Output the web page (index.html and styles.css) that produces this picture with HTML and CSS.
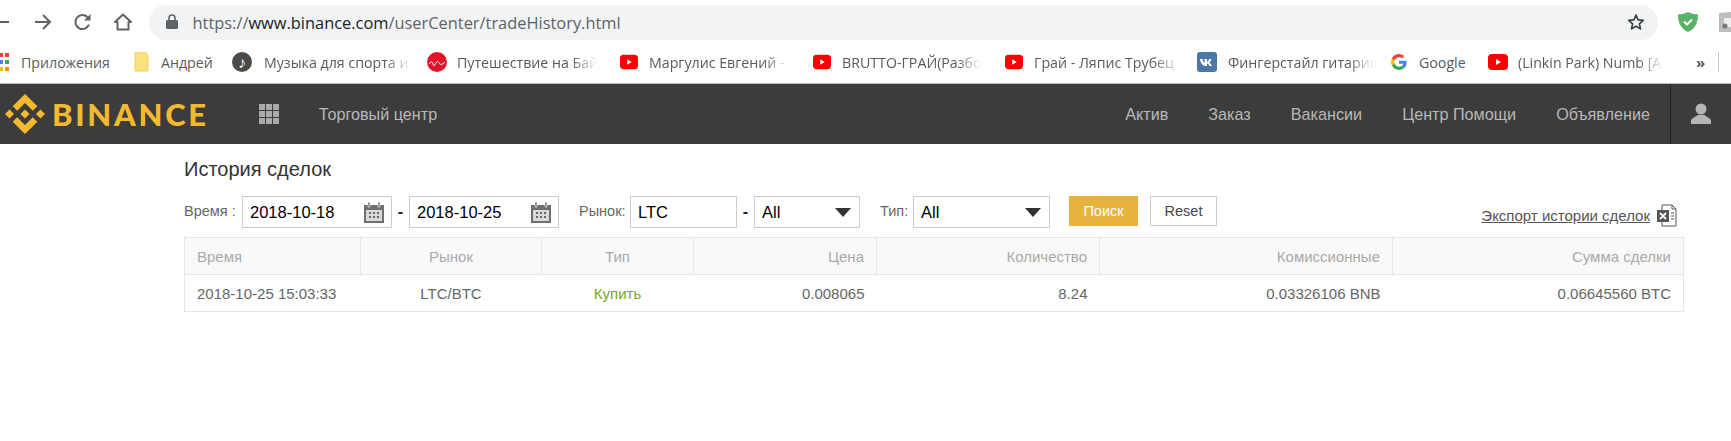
FILE: index.html
```html
<!DOCTYPE html>
<html lang="ru">
<head>
<meta charset="utf-8">
<title>История сделок</title>
<link rel="stylesheet" href="styles.css">
</head>
<body>
<svg class="defs" width="0" height="0">
  <symbol id="yt" viewBox="0 0 20 16"><rect width="20" height="16" y="0" rx="4" fill="#f00"/><path d="M8 5l5 3-5 3z" fill="#fff"/></symbol>
  <symbol id="cal" viewBox="0 0 20 22"><path d="M0 4h20v18H0z" fill="#6f6f6f"/><path d="M2 9h16v11H2z" fill="#d9d9d9"/><path d="M4 1h2v5H4zM14 1h2v5h-2z" fill="#6f6f6f" stroke="#fff" stroke-width=".6"/><path d="M5 11h2v2H5zM9 11h2v2H9zM13 11h2v2h-2zM5 15h2v2H5zM9 15h2v2H9zM13 15h2v2h-2z" fill="#666"/></symbol>
</svg>

<div class="toolbar">
  <svg class="back tool" width="22" height="20" viewBox="0 0 22 20"><path d="M20 10H3M10 3l-7 7 7 7" fill="none" stroke="#5f6368" stroke-width="2"/></svg>
  <svg class="forward tool" width="20" height="20" viewBox="0 0 20 20"><path d="M2 10h15M10 3l7 7-7 7" fill="none" stroke="#5f6368" stroke-width="2"/></svg>
  <svg class="reload tool" width="20" height="20" viewBox="0 0 20 20"><path d="M16 12.500a7 7 0 1 1-1-6.700" fill="none" stroke="#5f6368" stroke-width="2"/><path d="M17.500 2v6.500H11z" fill="#5f6368"/></svg>
  <svg class="home tool" width="20" height="20" viewBox="0 0 20 20"><path d="M10 2.500L2 10h2.500v7.500h11V10H18z" fill="none" stroke="#5f6368" stroke-width="2" stroke-linejoin="round"/></svg>
  <div class="omnibox">
    <svg class="lock" width="12" height="16" viewBox="0 0 12 16"><path d="M3 6V4a3 3 0 0 1 6 0v2" fill="none" stroke="#5f6368" stroke-width="1.600"/><rect y="6" width="12" height="9" rx="1.500" fill="#5f6368"/></svg>
    <span class="url"><span class="url-dim">https://</span>www.binance.com<span class="url-dim">/userCenter/tradeHistory.html</span></span>
    <svg class="star" width="18" height="18" viewBox="0 0 24 24"><path d="M12 2.800l2.800 6.300 6.900.7-5.200 4.600 1.500 6.800-6-3.500-6 3.500 1.500-6.800-5.200-4.600 6.900-.7z" fill="none" stroke="#3c4043" stroke-width="2.200" stroke-linejoin="round"/></svg>
  </div>
  <svg class="shield" width="20" height="22" viewBox="0 0 20 22"><path d="M10 1c3 1.600 6 2.300 10 2.300C20 12 17 18 10 21 3 18 0 12 0 3.300 4 3.300 7 2.600 10 1z" fill="#58b368"/><path d="M6 10.500l3 3 5-5" fill="none" stroke="#fff" stroke-width="2"/></svg>
  <svg class="ext" width="13" height="22" viewBox="0 0 13 22"><path d="M0 2l13-1v20H0z" fill="#bdbdbd"/><path d="M5 7h8v9H5z" fill="#eee"/><circle cx="6" cy="15" r="2.500" fill="#777"/></svg>
</div>

<div class="bookmarks">
  <svg class="apps" width="10" height="18" viewBox="0 0 10 18"><path d="M0 0h4v4H0z" fill="#ea4335"/><path d="M6 0h4v4H6z" fill="#ea4335"/><path d="M0 7h4v4H0z" fill="#4285f4"/><path d="M6 7h4v4H6z" fill="#34a853"/><path d="M0 14h4v4H0z" fill="#fbbc05"/><path d="M6 14h4v4H6z" fill="#fb8c00"/></svg>
  <span class="bm-label apps-label">Приложения</span>
  <svg class="folder" width="15" height="20" viewBox="0 0 15 20"><path d="M1 0h10l3 3v16H1z" fill="#fbe27f" stroke="#f3cf58"/></svg>
  <span class="bm-label andrey">Андрей</span>
  <span class="music">♪</span>
  <span class="bm-label fade first-fade">Музыка для спорта и</span>
  <svg class="travel" width="20" height="20" viewBox="0 0 20 20"><circle cx="10" cy="10" r="10" fill="#e0152a"/><path d="M2 12c2-3 3-3 4 0s2 1 3-1 2-2 3 0 3 2 6-1" fill="none" stroke="#fff"/></svg>
  <span class="bm-label fade trip">Путешествие на Бай</span>
  <svg class="yt" width="18" height="16"><use href="#yt"/></svg>
  <span class="bm-label fade">Маргулис Евгений -</span>
  <svg class="yt yt-b" width="18" height="16"><use href="#yt"/></svg>
  <span class="bm-label fade">BRUTTO-ГРАЙ(Разбо</span>
  <svg class="yt" width="18" height="16"><use href="#yt"/></svg>
  <span class="bm-label fade wide-grai">Грай - Ляпис Трубец</span>
  <svg class="vk" width="20" height="20" viewBox="0 0 20 20"><rect width="20" height="20" rx="3" fill="#4a76a8"/><path d="M3 7h2.500c.3 2 1 3.500 2 4V7H10v3c1-.4 1.800-1.700 2.200-3H14.500c-.4 1.700-1.300 3-2.200 3.700 1 .6 2 1.800 2.700 3.300h-2.500c-.5-1.200-1.400-2.200-2.500-2.400V14h-.8C6 14 3.600 11.500 3 7z" fill="#fff"/></svg>
  <span class="bm-label fade vk-label">Фингерстайл гитарис</span>
  <svg class="google" width="16" height="16" viewBox="0 0 48 48"><path fill="#ea4335" d="M24 9.500c3.500 0 6.700 1.200 9.200 3.600l6.900-6.900C35.900 2.400 30.500 0 24 0 14.600 0 6.500 5.400 2.600 13.200l8 6.200C12.500 13.700 17.800 9.500 24 9.500z"/><path fill="#4285f4" d="M46.900 24.500c0-1.600-.1-3.100-.4-4.500H24v9h12.900c-.6 3-2.200 5.400-4.700 7.100l7.700 6c4.500-4.200 7-10.300 7-17.600z"/><path fill="#fbbc05" d="M10.500 28.600c-.5-1.500-.8-3-.8-4.600s.3-3.200.8-4.600l-8-6.200C.9 16.500 0 20.100 0 24s.9 7.500 2.600 10.800z"/><path fill="#34a853" d="M24 48c6.500 0 11.900-2.100 15.900-5.900l-7.700-6c-2.200 1.500-4.900 2.300-8.200 2.300-6.200 0-11.500-4.200-13.400-9.800l-8 6.200C6.500 42.600 14.600 48 24 48z"/></svg>
  <span class="bm-label google-label">Google</span>
  <svg class="yt yt-last" width="20" height="16"><use href="#yt"/></svg>
  <span class="bm-label fade last-fade">(Linkin Park) Numb [A</span>
  <span class="more">»</span>
  <span class="bm-sep"></span>
</div>

<header class="nav">
  <svg class="logo-mark" width="40" height="40" viewBox="0 0 126.610 126.610"><path fill="#f3ba2f" d="M38.730 53.200l24.590-24.580 24.600 24.600 14.300-14.310L63.320 0 24.420 38.900l14.310 14.300zM0 63.310L14.300 49l14.310 14.310-14.310 14.300zM38.730 73.410L63.320 98l24.600-24.600 14.310 14.290-38.900 38.910-38.910-38.880-.02-.02zM98 63.310L112.300 49l14.310 14.300-14.310 14.320zM77.830 63.300L63.320 48.780 52.590 59.510l-1.240 1.230-2.540 2.540 14.510 14.500 14.510-14.470z"/></svg>
  <span class="logo-text">BINANCE</span>
  <div class="grid-icon"><i></i><i></i><i></i><i></i><i></i><i></i><i></i><i></i><i></i></div>
  <a class="nav-link trade">Торговый центр</a>
  <nav class="nav-right">
    <a class="nav-link">Актив</a>
    <a class="nav-link">Заказ</a>
    <a class="nav-link">Вакансии</a>
    <a class="nav-link">Центр Помощи</a>
    <a class="nav-link">Объявление</a>
  </nav>
  <div class="user">
    <svg width="20" height="22" viewBox="0 0 20 22"><circle cx="10" cy="6" r="5.500" fill="#b5b5b5"/><path d="M0 21v-3c0-3 5-4 6.500-6h7c1.500 2 6.500 3 6.500 6v3z" fill="#b5b5b5"/></svg>
  </div>
</header>

<main class="page">
  <h1 class="title">История сделок</h1>
  <div class="filters">
    <span class="label time-label">Время :</span>
    <div class="field date"><span>2018-10-18</span><svg width="20" height="22"><use href="#cal"/></svg></div>
    <b class="dash">-</b>
    <div class="field date"><span>2018-10-25</span><svg width="20" height="22"><use href="#cal"/></svg></div>
    <span class="label market-label">Рынок:</span>
    <div class="field market"><span>LTC</span></div>
    <b class="dash">-</b>
    <div class="field select all-one"><span>All</span><i class="caret"></i></div>
    <span class="label type-label">Тип:</span>
    <div class="field select all-two"><span>All</span><i class="caret"></i></div>
    <button class="btn search">Поиск</button>
    <button class="btn reset">Reset</button>
    <a class="export"><span>Экспорт истории сделок</span>
      <svg width="20" height="23" viewBox="0 0 20 23"><path d="M5 6V1h10l4 4v17H5v-4" fill="#fff" stroke="#555"/><path d="M15 1v4h4" fill="none" stroke="#555"/><rect y="6" width="12" height="12" fill="#555"/><path d="M3 9l6 6M9 9l-6 6" stroke="#fff" stroke-width="1.800"/><path d="M14 9h3M14 12h3M14 15h3" stroke="#555"/></svg>
    </a>
  </div>
  <table class="history">
    <colgroup>
      <col class="c1"><col class="c2"><col class="c3"><col class="c4"><col class="c5"><col class="c6"><col class="c7">
    </colgroup>
    <thead>
      <tr>
        <th class="left">Время</th><th class="center">Рынок</th><th class="center">Тип</th>
        <th>Цена</th><th>Количество</th><th>Комиссионные</th><th>Сумма сделки</th>
      </tr>
    </thead>
    <tbody>
      <tr>
        <td class="left">2018-10-25 15:03:33</td><td class="center">LTC/BTC</td><td class="center buy">Купить</td>
        <td>0.008065</td><td>8.24</td><td>0.03326106 BNB</td><td>0.06645560 BTC</td>
      </tr>
    </tbody>
  </table>
</main>
</body>
</html>
```

FILE: styles.css
```css
* { box-sizing: border-box; }
html, body { margin: 0; padding: 0; }
body {
  width: 1731px;
  height: 441px;
  overflow: hidden;
  background: #fff;
  font-family: "Liberation Sans", Arial, sans-serif;
  color: #666;
}
.defs { display: block; height: 0; }

/* browser toolbar */
.toolbar {
  height: 45px;
  display: flex;
  align-items: center;
  padding-bottom: 2px;
}
.tool { flex: none; }
.back { margin-left: -11px; }
.forward { margin-left: 22px; }
.reload { margin-left: 20px; }
.home { margin-left: 20px; }
.omnibox {
  flex: none;
  width: 1509px;
  height: 35px;
  margin-left: 16px;
  margin-top: 1px;
  border-radius: 18px;
  background: #f1f3f4;
  display: flex;
  align-items: center;
  padding-left: 17px;
  padding-right: 13px;
}
.url {
  margin-left: 14.500px;
  font-family: "Open Sans", sans-serif;
  font-size: 16.400px;
  color: #202124;
  white-space: nowrap;
}
.url-dim { color: #5f6368; }
.star { margin-left: auto; }
.shield { margin-left: 20px; flex: none; }
.ext { margin-left: 21px; flex: none; }

/* bookmarks */
.bookmarks {
  height: 39px;
  border-bottom: 1px solid #bdbdbd;
  display: flex;
  align-items: center;
  padding-bottom: 4px;
  font-family: "Open Sans", sans-serif;
  font-size: 14.200px;
  color: #5a5a5a;
  white-space: nowrap;
}
.bookmarks svg { flex: none; }
.apps { margin-left: -1px; }
.bm-label { flex: none; margin-left: 11px; }
.apps-label { margin-left: 12px; width: 89px; }
.folder { margin-left: 24px; }
.andrey { margin-left: 12px; width: 51px; }
.music {
  flex: none;
  width: 20px;
  height: 20px;
  margin-left: 20px;
  border-radius: 50%;
  background: #4a4a4a;
  color: #fff;
  font-size: 16px;
  line-height: 20px;
  text-align: center;
}
.fade {
  width: 140px;
  overflow: hidden;
  -webkit-mask-image: linear-gradient(to right, #000 82%, transparent 100%);
  mask-image: linear-gradient(to right, #000 82%, transparent 100%);
}
.first-fade { margin-left: 12px; width: 147px; }
.travel { margin-left: 16px; }
.trip { width: 140px; margin-left: 10px; }
.yt { margin-left: 22px; }
.fade + .yt { margin-left: 23px; }
.bookmarks .yt-b { margin-left: 24px; }
.wide-grai { width: 146px; }
.vk { margin-left: 17px; }
.vk-label { margin-left: 11px; width: 147px; }
.google { margin-left: 16px; }
.google-label { margin-left: 12px; width: 48px; }
.bookmarks .yt-last { margin-left: 21px; }
.last-fade { width: 146px; margin-left: 10px; }
.more { flex: none; margin-left: 32px; font-size: 15px; font-weight: 700; width: 8px; }
.bm-sep { flex: none; width: 1px; height: 20px; margin-left: 14px; background: #ccc; }

/* site header */
.nav {
  height: 60px;
  background: #3c3c3c;
  display: flex;
  align-items: center;
  padding-left: 5px;
}
.logo-mark { flex: none; margin-top: -1px; }
.logo-text {
  margin-left: 7px;
  font-family: "Lato", sans-serif;
  font-weight: 900;
  font-size: 31px;
  letter-spacing: 2.700px;
  line-height: 1;
  color: #f3ba2f;
}
.grid-icon {
  flex: none;
  width: 20px;
  height: 20px;
  margin-left: 50px;
  display: grid;
  grid-template-columns: repeat(3, 6px);
  grid-auto-rows: 6px;
  gap: 1px;
}
.grid-icon i { background: #aaa; }
.nav-link { font-size: 16.200px; color: #b8b8b8; white-space: nowrap; }
.trade { margin-left: 40px; }
.nav-right {
  margin-left: auto;
  display: flex;
  gap: 40px;
  padding-right: 20px;
}
.user {
  flex: none;
  width: 61px;
  height: 60px;
  border-left: 1px solid #222;
  display: flex;
  align-items: center;
  justify-content: center;
}

/* page */
.page { width: 1684px; padding-left: 184px; }
.title {
  margin: 14px 0 0;
  height: 23px;
  font-size: 20px;
  line-height: 23px;
  font-weight: 400;
  color: #333;
}
.filters {
  height: 31px;
  margin-top: 15px;
  display: flex;
  align-items: flex-start;
  white-space: nowrap;
}
.label { font-size: 14.500px; line-height: 31px; }
.time-label { width: 58px; }
.market-label { margin-left: 20px; width: 51px; }
.type-label { margin-left: 20px; width: 33px; }
.field {
  flex: none;
  height: 32px;
  border: 1px solid #ccc;
  display: flex;
  align-items: center;
  padding: 0 7px;
  color: #000;
  font-size: 16.500px;
  background: #fff;
}
.date { width: 150px; justify-content: space-between; padding-right: 7px; }
.date svg { flex: none; }
.market { width: 107px; }
.select { justify-content: space-between; }
.all-one { width: 106px; }
.all-two { width: 137px; }
.caret {
  width: 0;
  height: 0;
  margin-right: 1px;
  border-left: 8px solid transparent;
  border-right: 8px solid transparent;
  border-top: 9px solid #333;
}
.dash {
  flex: none;
  width: 17px;
  text-align: center;
  line-height: 31px;
  font-size: 16px;
  color: #222;
}
.btn {
  flex: none;
  height: 30px;
  font: inherit;
  font-size: 14.500px;
  padding: 0;
}
.search { width: 69px; margin-left: 19px; border: 0; background: #e8b23f; color: #fff; }
.reset { width: 67px; margin-left: 12px; border: 1px solid #ccc; background: #fff; color: #444; }
.export {
  margin-left: auto;
  margin-top: 8px;
  margin-right: 7px;
  display: flex;
  align-items: center;
  gap: 7px;
  font-size: 15px;
  color: #555;
  text-decoration: underline;
}
.export svg { flex: none; }

/* table */
.history {
  width: 1499px;
  margin-top: 10px;
  border-collapse: collapse;
  table-layout: fixed;
  font-size: 15px;
}
.c1 { width: 176px; }
.c2 { width: 181px; }
.c3 { width: 152px; }
.c4 { width: 183px; }
.c5 { width: 223px; }
.c6 { width: 293px; }
.c7 { width: 291px; }
.history th, .history td {
  height: 37px;
  padding: 0 12px;
  text-align: right;
  font-weight: 400;
  white-space: nowrap;
}
.history th {
  background: #f9f9f9;
  color: #a9a9a9;
  border: 1px solid #e6e6e6;
}
.history td {
  border-top: 1px solid #e6e6e6;
  border-bottom: 1px solid #e6e6e6;
  color: #666;
}
.history td:first-child { border-left: 1px solid #e6e6e6; }
.history td:last-child { border-right: 1px solid #e6e6e6; }
.history .left { text-align: left; }
.history .center { text-align: center; }
.history .buy { color: #78a81a; }
```
